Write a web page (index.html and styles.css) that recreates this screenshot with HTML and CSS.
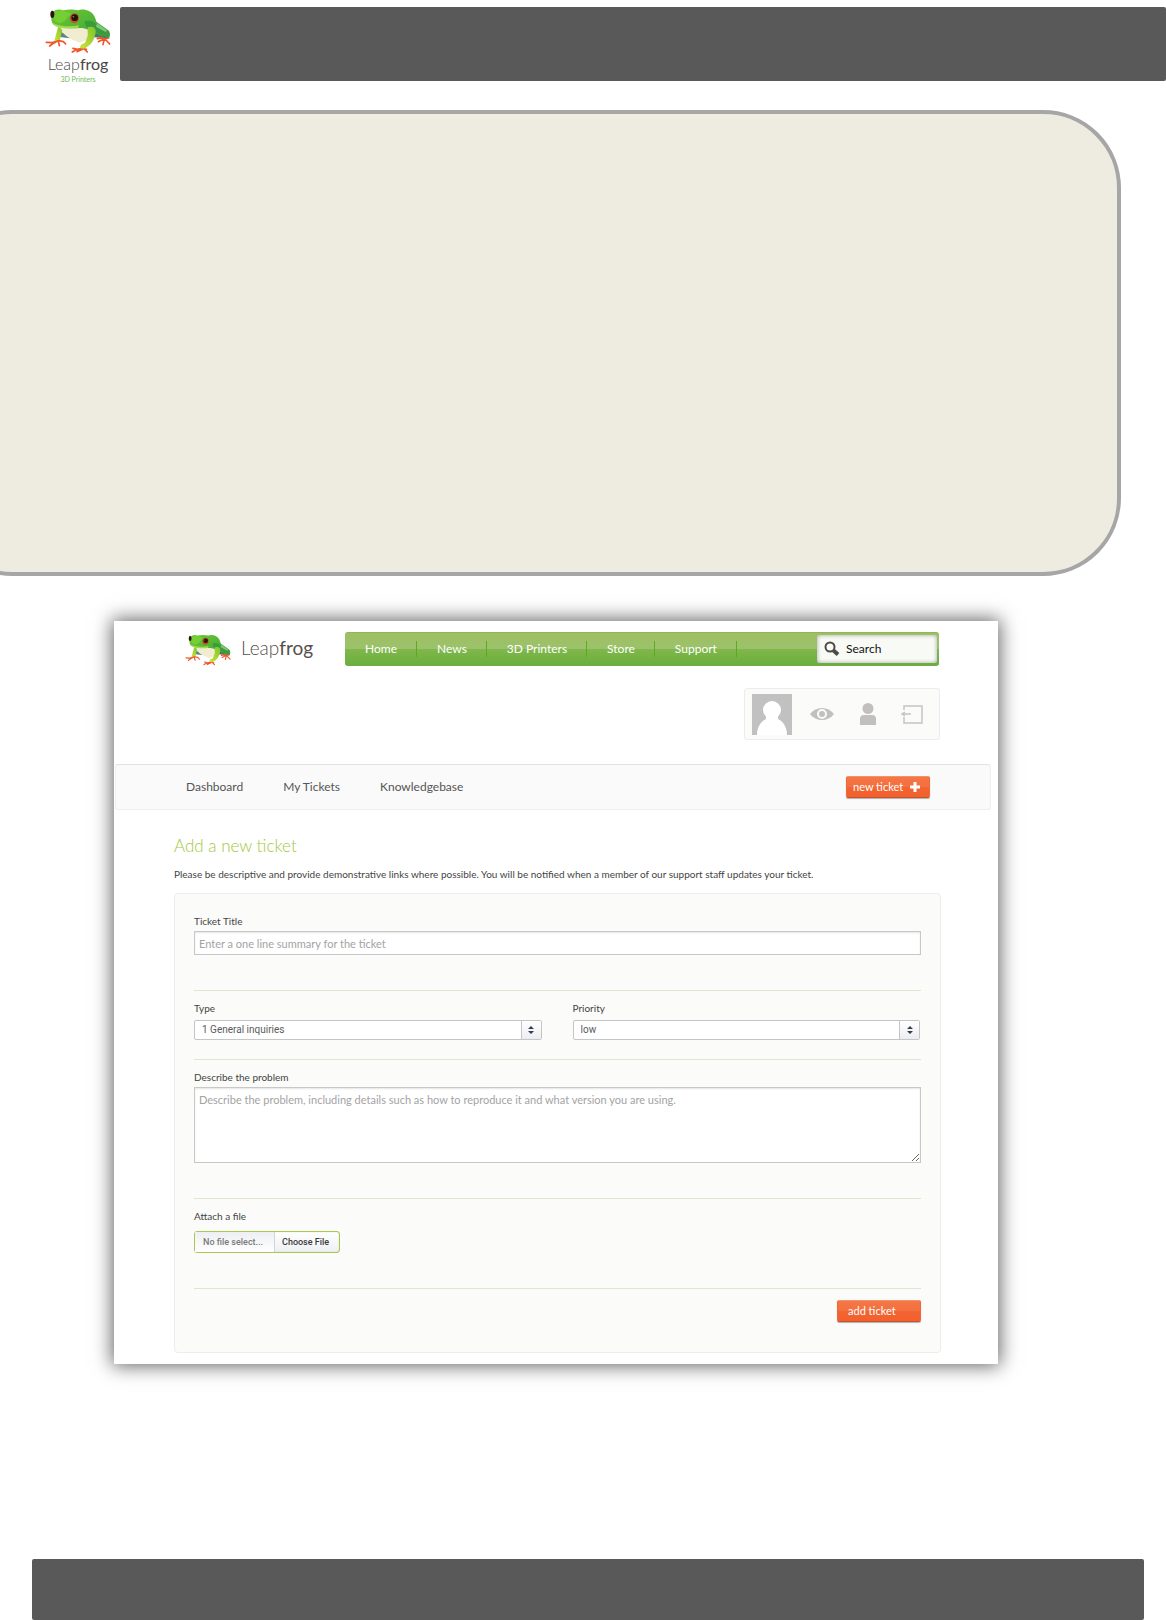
FILE: index.html
```html
<!DOCTYPE html>
<html lang="en">
<head>
<meta charset="utf-8">
<title>Leapfrog 3D Printers - Add a new ticket</title>
<link rel="stylesheet" href="styles.css">
</head>
<body>
<svg class="sprite" aria-hidden="true">
  <defs>
    <linearGradient id="skin" x1="0" y1="0" x2="1" y2="1">
      <stop offset="0" stop-color="#72c832"/><stop offset=".55" stop-color="#4fb436"/><stop offset="1" stop-color="#3a9440"/>
    </linearGradient>
    <linearGradient id="leg" x1="1" y1="0" x2="0" y2="1">
      <stop offset="0" stop-color="#7cc62c"/><stop offset="1" stop-color="#d3e03a"/>
    </linearGradient>
  </defs>
  <symbol id="frog" viewBox="135 22 200 138">
    <path d="M178 92l36 12-4 9-30-4z" fill="#5d8580"/>
    <path d="M268 88l58 16-2 9-50-4z" fill="#48746b"/>
    <path d="M174 74c12 26 36 42 66 52l34-14 8-40-50-8z" fill="#f0ecd0"/>
    <path d="M176 76l-12 44 16 2 8-34z" fill="url(#leg)"/>
    <g fill="none" stroke="#f0562b" stroke-width="5" stroke-linecap="round" stroke-linejoin="round">
      <path d="M174 121l-16 5-18-1M172 122l-14 8-8 6M176 121l3 14M177 120l14 3 7 7"/>
      <path d="M250 142l-16 4-14-3M248 144l-20 4-10 6M250 145l-18 8M252 143l11 11M250 144l10 2"/>
      <path d="M300 110l12 5 15-3M312 115l-16 8M314 115l-4 17M316 115l14 15M306 112l-13 2"/>
    </g>
    <path d="M160 34c10-10 22-8 30-5 16-4 34-3 46 0 6-4 22-4 32 2 10 5 18 14 22 32l36 26c6 6 6 14 3 22l-24-4-30-14c-12-8-22-12-34-11-30 2-64-1-78-9-10-8-10-26-3-39z" fill="url(#skin)"/>
    <path d="M160 38c14-13 46-6 56 4-16 2-14 21-34 25-14 1-22-8-22-29z" fill="#76ce35"/>
    <path d="M158 66c24 12 56 13 80 8l-3 8c-30 3-70 2-77-16z" fill="#a5d84b"/>
    <path d="M254 64c12-8 26-2 38 8l30 24-18 4-42-18z" fill="#3a9a3e"/>
    <path d="M264 80c20-6 27 5 23 21-4 15-8 26-21 35-8 8-19 10-25 5 0-8 8-12 15-14l8-22z" fill="url(#leg)"/>
    <path d="M292 68l30 21-4 5-29-16z" fill="#82c778"/>
    <ellipse cx="158" cy="41" rx="6" ry="11" fill="#2b1510"/>
    <ellipse cx="224" cy="53" rx="14" ry="15" fill="#bd5725"/>
    <ellipse cx="225" cy="51" rx="10" ry="10" fill="#281210"/>
    <circle cx="221" cy="48" r="2" fill="#b59b8b"/>
  </symbol>
</svg>

<header class="page-head">
  <div class="page-logo">
    <svg class="page-frog" role="img" aria-label="Frog"><use href="#frog"/></svg>
    <span class="page-name">Leap<b>frog</b></span>
    <span class="page-tag">3D Printers</span>
  </div>
  <div class="page-bar"></div>
</header>

<section class="note"></section>

<main class="shot">
  <header class="site-head">
    <a class="brand" href="#">
      <svg class="brand-frog" aria-hidden="true"><use href="#frog"/></svg>
      <span class="brand-name">Leap<b>frog</b></span>
    </a>
    <nav class="main-nav">
      <a href="#">Home</a>
      <a href="#">News</a>
      <a href="#">3D Printers</a>
      <a href="#">Store</a>
      <a href="#">Support</a>
      <div class="search">
        <svg viewBox="0 0 16 16" aria-hidden="true"><circle cx="6" cy="6" r="4.5" fill="none" stroke="#4e4a44" stroke-width="2"/><path d="M9.500 9.500l4.500 4" stroke="#4e4a44" stroke-width="4"/></svg>
        <input type="text" value="Search" aria-label="Search">
      </div>
    </nav>
  </header>

  <div class="user-box">
    <svg class="avatar" viewBox="0 0 40 41" role="img" aria-label="Avatar"><path fill="#c1c1c1" d="M0 0h40v41H0z"/><circle cx="20" cy="16" r="9" fill="#fff"/><path d="M14 22v3C8 28 5 34 5 41h30c0-7-3-13-9-16v-3z" fill="#fff"/></svg>
    <a href="#" aria-label="View"><svg class="eye" viewBox="0 0 24 14"><path d="M0 7C6-1 18-1 24 7 18 15 6 15 0 7z" fill="#c1c0be"/><circle cx="12" cy="7" r="4" fill="none" stroke="#fbfbfa" stroke-width="2"/></svg></a>
    <a href="#" aria-label="Profile"><svg class="person" viewBox="0 0 16 22"><circle cx="8" cy="5.500" r="5.500" fill="#c1c0be"/><path d="M0 22v-6q0-4 4-4h8q4 0 4 4v6z" fill="#c1c0be"/></svg></a>
    <a href="#" aria-label="Log out"><svg class="exit" viewBox="0 0 22 20"><path d="M3 6V2h18v17H3v-6M1 10h9M4 8l-3 2 3 2" fill="none" stroke="#c6c5c2" stroke-width="1.500"/></svg></a>
  </div>

  <nav class="sub-nav">
    <a href="#">Dashboard</a>
    <a href="#">My Tickets</a>
    <a href="#">Knowledgebase</a>
    <button class="btn btn-new" type="button">new ticket
      <svg viewBox="0 0 10 10" aria-hidden="true"><path d="M5 0v10M0 5h10" stroke="#fff" stroke-width="3"/></svg>
    </button>
  </nav>

  <div class="content">
    <h1>Add a new ticket</h1>
    <p>Please be descriptive and provide demonstrative links where possible. You will be notified when a member of our support staff updates your ticket.</p>

    <form class="panel">
      <div class="group group-tall">
        <label for="title">Ticket Title</label>
        <input class="text" id="title" type="text" placeholder="Enter a one line summary for the ticket">
      </div>
      <div class="group group-pair">
        <div>
          <label for="type">Type</label>
          <div class="select">
            <select id="type"><option>1 General inquiries</option></select>
            <span class="arrows"><svg viewBox="0 0 6 8"><path d="M0 3l3-3 3 3zM0 5h6L3 8z" fill="#333b4d"/></svg></span>
          </div>
        </div>
        <div>
          <label for="priority">Priority</label>
          <div class="select">
            <select id="priority"><option>low</option></select>
            <span class="arrows"><svg viewBox="0 0 6 8"><path d="M0 3l3-3 3 3zM0 5h6L3 8z" fill="#333b4d"/></svg></span>
          </div>
        </div>
      </div>
      <div class="group group-tall">
        <label for="problem">Describe the problem</label>
        <textarea id="problem" placeholder="Describe the problem, including details such as how to reproduce it and what version you are using."></textarea>
      </div>
      <div class="group group-tall">
        <label for="file">Attach a file</label>
        <label class="picker">
          <input id="file" type="file">
          <span class="picked">No file select...</span>
          <span class="choose">Choose File</span>
        </label>
      </div>
      <div class="actions">
        <button class="btn btn-add" type="submit">add ticket</button>
      </div>
    </form>
  </div>
</main>

<footer class="page-foot"></footer>
</body>
</html>
```
FILE: styles.css
```css
* { box-sizing: border-box; }

body {
  margin: 0;
  min-height: 100vh;
  display: flex;
  flex-direction: column;
  background: #fff;
  color: #444;
  font: 10px/14px Lato, "Liberation Sans", sans-serif;
}

a { color: inherit; text-decoration: none; }
svg { display: block; }
.sprite { position: absolute; width: 0; height: 0; }

/* Page header */
.page-head { display: flex; padding-top: 7px; }
.page-logo {
  width: 120px;
  padding: 1px 8px 0 44px;
  display: flex;
  flex-direction: column;
  align-items: center;
}
.page-frog { width: 68px; height: 46px; }
.page-name {
  font: 300 16px/20px Lato, sans-serif;
  color: #4a4643;
}
.page-tag {
  font: 400 7px/10px Lato, sans-serif;
  color: #70b857;
}
.page-bar {
  flex: 1;
  height: 74px;
  border-radius: 2px;
  background: #595959;
}

/* Rounded note panel, running off the left edge */
.note {
  height: 466px;
  margin: 26px 45px 0 -66px;
  border: 4px solid #a6a6a6;
  border-radius: 78px;
  background: #eeebe0;
}

/* Help desk window */
.shot {
  margin: 45px 168px 195px 114px;
  padding: 11px 0;
  background: #fff;
  box-shadow: 0 0 18px 2px rgba(0, 0, 0, .6);
}

.site-head {
  display: flex;
  margin: 0 59px 0 70px;
}
.brand {
  width: 161px;
  display: flex;
  gap: 9px;
  padding-top: 2px;
}
.brand-frog { width: 48px; height: 32px; }
.brand-name {
  font: 300 19px/28px Lato, sans-serif;
  color: #57504b;
}

.main-nav {
  flex: 1;
  height: 34px;
  display: flex;
  align-items: center;
  padding: 0 2px 0 0;
  border-radius: 3px;
  border-top: 1px solid #8fb658;
  border-bottom: 1px solid #6faf43;
  background: linear-gradient(#9fbf62, #9bc26c 49%, #80b74b 50%, #6bae3f);
  color: #fff;
  font: 12px/16px Lato, sans-serif;
}
.main-nav a {
  padding: 0 19px 0 20px;
  border-right: 1px solid #5aaa22;
}
.search {
  width: 120px;
  height: 28px;
  margin-left: auto;
  padding-left: 7px;
  display: flex;
  align-items: center;
  gap: 6px;
  border-radius: 2px;
  background: #f8faf6;
  box-shadow: inset 0 0 4px rgba(0, 0, 0, .35);
}
.search svg { width: 16px; height: 16px; flex: none; }
.search input {
  width: 100%;
  min-width: 0;
  padding: 0;
  border: 0;
  background: none;
  color: #111;
  font: inherit;
}

.user-box {
  width: 196px;
  height: 52px;
  margin: 22px 58px 24px auto;
  padding: 0 16px 0 7px;
  display: flex;
  align-items: center;
  justify-content: space-between;
  border: 1px solid #ececec;
  border-radius: 3px;
  background: #fbfbfa;
}
.avatar { width: 40px; height: 41px; }
.eye { width: 24px; height: 14px; margin-right: 8px; margin-left: 1px; }
.person { width: 16px; height: 22px; margin-right: 8px; }
.exit { width: 22px; height: 20px; }

.sub-nav {
  height: 46px;
  margin: 0 7px 0 1px;
  padding: 0 60px 0 70px;
  display: flex;
  align-items: center;
  gap: 40px;
  border: 1px solid #efefef;
  border-top-color: #e2e2e2;
  border-radius: 3px;
  background: #fafafa;
  color: #555;
  font: 12px/16px Lato, sans-serif;
}

.btn {
  width: 84px;
  height: 22px;
  display: flex;
  align-items: center;
  border: 1px solid #ef6a3a;
  border-top-color: #ee9270;
  border-bottom-color: #c8502a;
  border-radius: 2px;
  background: linear-gradient(#f67645, #f37040 49%, #f26432 50%, #f2602c);
  box-shadow: 0 1px 1px rgba(0, 0, 0, .3);
  color: #fff;
  font: 11px/16px Lato, sans-serif;
  white-space: nowrap;
}
.btn-new { margin-left: auto; padding: 0 9px 0 6px; justify-content: space-between; }
.btn-new svg { width: 10px; height: 10px; }
.btn-add { padding: 0 10px; }

/* Ticket form */
.content { margin: 0 57px 0 60px; padding-top: 22px; }
h1 {
  margin: 0;
  color: #a4c73c;
  font: 300 17px/28px Lato, sans-serif;
}
p { margin: 7px 0 12px; }
.panel {
  padding: 19px 19px 30px;
  border: 1px solid #ededed;
  border-radius: 4px;
  background: #fbfbf9;
}
.group {
  margin-bottom: 9px;
  padding-bottom: 19px;
  border-bottom: 1px solid #e2e4d2;
}
.group-tall { padding-bottom: 35px; }
.group-pair {
  display: grid;
  grid-template-columns: 1fr 1fr;
  gap: 31px;
  padding-right: 1px;
}
label { display: block; line-height: 16px; }

.text, textarea {
  display: block;
  width: 100%;
  margin-top: 2px;
  padding: 0 4px;
  border: 1px solid #c8c8c8;
  border-radius: 0;
  background: #fff;
  box-shadow: inset 0 1px 2px rgba(0, 0, 0, .1);
  color: #444;
  font: 11px/16px Lato, sans-serif;
}
.text { height: 24px; }
textarea { height: 76px; padding-top: 4px; }
::placeholder { color: #a3a3a3; opacity: 1; }

.select {
  height: 20px;
  margin-top: 4px;
  display: grid;
  grid-template-columns: 1fr 20px;
  border: 1px solid #c4c5c6;
  border-radius: 2px;
  background: #fff;
}
.select select {
  grid-area: 1 / 1 / 2 / 3;
  padding: 0 7px;
  border: 0;
  background: none;
  appearance: none;
  color: #5a5a5a;
  font: 10px/16px Roboto, sans-serif;
}
.arrows {
  grid-area: 1 / 2;
  display: grid;
  place-items: center;
  border-left: 1px solid #c4c5c6;
  background: linear-gradient(#fff, #ecedf2);
  pointer-events: none;
}
.arrows svg { width: 6px; height: 8px; }

.picker {
  width: 146px;
  height: 22px;
  margin-top: 7px;
  display: flex;
  border: 1px solid #a9c751;
  border-radius: 3px;
  background: linear-gradient(#fff, #eeeff3);
  box-shadow: inset 0 0 1px #a9c751;
  font: 500 9px/20px Roboto, sans-serif;
}
.picker input { position: absolute; width: 1px; height: 1px; opacity: 0; }
.picked {
  width: 80px;
  padding-left: 8px;
  border-right: 1px solid #d2d4d8;
  background: linear-gradient(#eeeff3, #fff);
  color: #7a7a7a;
}
.choose { padding-left: 7px; color: #3a3a3a; }
.actions { display: flex; justify-content: flex-end; padding-top: 2px; }

.page-foot {
  height: 61px;
  margin: auto 22px 0 32px;
  border-radius: 2px;
  background: #595959;
}
```
